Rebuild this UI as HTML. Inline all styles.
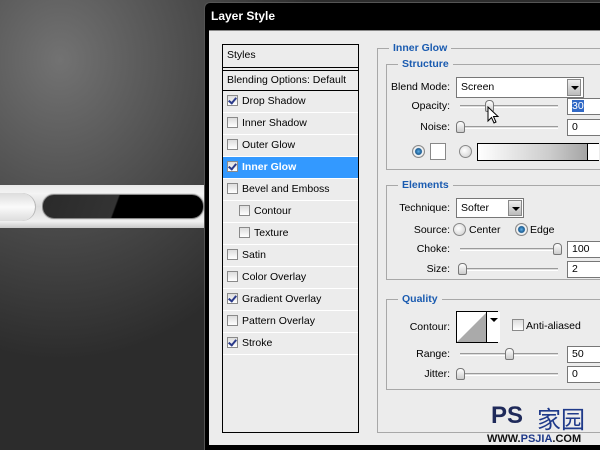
<!DOCTYPE html>
<html><head><style>
*{margin:0;padding:0;box-sizing:border-box}
html,body{width:600px;height:450px;overflow:hidden}
body{position:relative;font-family:"Liberation Sans",sans-serif;font-size:10.5px;color:#000;background:radial-gradient(ellipse 260px 300px at 60px 60px,#727272,#4a4a4a 55%,#2c2c2c);}
.a{position:absolute}
.row{position:absolute;left:0;width:135px;height:22px;border-bottom:1px solid #fff;line-height:21px;padding-left:4px;white-space:nowrap}
.cb{display:inline-block;width:11px;height:11px;border:1px solid #8a8a8a;background:linear-gradient(#ddd,#fff);vertical-align:-2px;margin-right:4px;position:relative}
.cb.c::after{content:"";position:absolute;left:2px;top:0px;width:3px;height:6px;border:solid #2a3a8a;border-width:0 2px 2px 0;transform:rotate(40deg)}
.box{position:absolute;border:1px solid #a8a8a8}
.leg{position:absolute;background:#ececec;color:#1a5bb0;font-weight:bold;padding:0 4px;font-size:10.5px}
.lbl{position:absolute;text-align:right;font-size:10.5px}
.sl{position:absolute;height:3px;border-top:1px solid #9a9a9a;border-bottom:1px solid #fff;background:#ddd}
.th{position:absolute;width:9px;height:12px;border:1px solid #777;border-radius:4px 4px 2px 2px;background:linear-gradient(#fff,#ccc)}
.in{position:absolute;background:#fff;border:1px solid #777;height:17px;line-height:15px;padding-left:4px}
.dd{position:absolute;width:14px;border:1px solid #888;background:linear-gradient(#eee,#bbb)}
.dd::after{content:"";position:absolute;left:3px;top:6px;border:4px solid transparent;border-top:4px solid #000}
.rad{position:absolute;width:13px;height:13px;border-radius:50%;border:1px solid #888;background:radial-gradient(circle at 40% 40%,#fff,#ccc)}
.rad.on{background:radial-gradient(circle,#5fb0e8 0,#1a5a90 3px,#fff 4px,#ccc 6px)}
</style></head><body>
<!-- left bar -->
<div class="a" style="left:0;top:185px;width:207px;height:43px;background:linear-gradient(#e8e8e8,#f4f4f4 20%,#dcdcdc 50%,#f0f0f0 85%,#c8c8c8)"></div>
<div class="a" style="left:0;top:193px;width:36px;height:28px;background:linear-gradient(#ddd,#fafafa,#ddd);border-radius:0 14px 14px 0;border-right:1px solid #bbb"></div>
<div class="a" style="left:18px;top:193px;width:18px;height:28px;border-radius:0 14px 14px 0;border-right:1px solid #bbb"></div>
<div class="a" style="left:42px;top:194px;width:162px;height:25px;border-radius:12px;border:1px solid #888;background:linear-gradient(110deg,#2a2a2a 0,#333 45%,#000 46%);box-shadow:0 0 0 1px #ddd"></div>
<!-- dialog -->
<div class="a" style="left:204px;top:2px;width:396px;height:448px;background:#000;border-radius:6px 0 0 0;border:1px solid #555;border-right:none;border-bottom:none"></div>
<div class="a" style="left:211px;top:9px;color:#fff;font-weight:bold;font-size:12px">Layer Style</div>
<div class="a" style="left:209px;top:30px;width:391px;height:415px;background:#ececec;border-top:1px solid #888"></div>
<!-- list -->
<div class="a" style="left:222px;top:44px;width:137px;height:389px;border:1px solid #000;background:#ececec">
<div class="row" style="top:0;height:23px;border-bottom:1px solid #000;line-height:20px">Styles</div>
<div class="row" style="top:25px;height:21px;border-top:1px solid #000;border-bottom:1px solid #000;line-height:19px">Blending Options: Default</div>
<div class="row" style="top:46px"><span class="cb c"></span>Drop Shadow</div>
<div class="row" style="top:68px"><span class="cb"></span>Inner Shadow</div>
<div class="row" style="top:90px"><span class="cb"></span>Outer Glow</div>
<div class="row" style="top:112px;background:#3399ff;color:#fff;font-weight:bold"><span class="cb c"></span>Inner Glow</div>
<div class="row" style="top:134px"><span class="cb"></span>Bevel and Emboss</div>
<div class="row" style="top:156px;padding-left:16px"><span class="cb"></span>Contour</div>
<div class="row" style="top:178px;padding-left:16px"><span class="cb"></span>Texture</div>
<div class="row" style="top:200px"><span class="cb"></span>Satin</div>
<div class="row" style="top:222px"><span class="cb"></span>Color Overlay</div>
<div class="row" style="top:244px"><span class="cb c"></span>Gradient Overlay</div>
<div class="row" style="top:266px"><span class="cb"></span>Pattern Overlay</div>
<div class="row" style="top:288px"><span class="cb c"></span>Stroke</div>
</div>
<!-- right -->
<div class="box" style="left:377px;top:48px;width:240px;height:385px"></div>
<div class="leg" style="left:389px;top:42px">Inner Glow</div>
<div class="box" style="left:386px;top:64px;width:230px;height:106px"></div>
<div class="leg" style="left:398px;top:58px">Structure</div>
<div class="lbl" style="left:380px;width:70px;top:81px">Blend Mode:</div>
<div class="in" style="left:456px;top:77px;width:128px;height:21px;line-height:19px">Screen</div>
<div class="dd" style="left:567px;top:79px;height:17px"></div>
<div class="lbl" style="left:380px;width:70px;top:100px">Opacity:</div>
<div class="sl" style="left:460px;top:105px;width:98px"></div><div class="th" style="left:485px;top:100px"></div>
<div class="in" style="left:567px;top:98px;width:40px"><span style="background:#3169c6;color:#fff">30</span></div>
<svg class="a" style="left:487px;top:106px" width="14" height="20"><path d="M1 1 L1 15 L4.5 11.5 L7 17 L9 16 L6.5 10.5 L11 10.5 Z" fill="#fff" stroke="#000"/></svg>
<div class="lbl" style="left:380px;width:70px;top:121px">Noise:</div>
<div class="sl" style="left:460px;top:126px;width:98px"></div><div class="th" style="left:456px;top:121px"></div>
<div class="in" style="left:567px;top:119px;width:40px">0</div>
<div class="rad on" style="left:412px;top:145px"></div>
<div class="a" style="left:430px;top:143px;width:16px;height:17px;background:#fff;border:1px solid #888"></div>
<div class="rad" style="left:459px;top:145px"></div>
<div class="a" style="left:477px;top:143px;width:122px;height:18px;border:1px solid #000;background:linear-gradient(90deg,#fff,#ccc 60%,#999)"></div>
<div class="a" style="left:587px;top:144px;width:12px;height:16px;background:#fff;border-left:1px solid #000"></div>
<div class="box" style="left:386px;top:185px;width:230px;height:95px"></div>
<div class="leg" style="left:398px;top:179px">Elements</div>
<div class="lbl" style="left:380px;width:70px;top:202px">Technique:</div>
<div class="in" style="left:456px;top:198px;width:68px;height:20px;line-height:18px">Softer</div>
<div class="dd" style="left:508px;top:200px;height:16px"></div>
<div class="lbl" style="left:380px;width:70px;top:224px">Source:</div>
<div class="rad" style="left:453px;top:223px"></div><div class="a" style="left:469px;top:224px">Center</div>
<div class="rad on" style="left:515px;top:223px"></div><div class="a" style="left:530px;top:224px">Edge</div>
<div class="lbl" style="left:380px;width:70px;top:243px">Choke:</div>
<div class="sl" style="left:460px;top:248px;width:98px"></div><div class="th" style="left:553px;top:243px"></div>
<div class="in" style="left:567px;top:241px;width:40px">100</div>
<div class="lbl" style="left:380px;width:70px;top:263px">Size:</div>
<div class="sl" style="left:460px;top:268px;width:98px"></div><div class="th" style="left:458px;top:263px"></div>
<div class="in" style="left:567px;top:261px;width:40px">2</div>
<div class="box" style="left:386px;top:299px;width:230px;height:91px"></div>
<div class="leg" style="left:398px;top:293px">Quality</div>
<div class="lbl" style="left:380px;width:70px;top:321px">Contour:</div>
<div class="a" style="left:456px;top:311px;width:42px;height:32px;border:1px solid #000;background:#fff">
<svg width="30" height="30" style="position:absolute;left:0;top:0"><path d="M0 30 L30 0 L30 30 Z" fill="#aaa"/></svg>
<div class="dd" style="left:29px;top:0;height:30px;border:none;background:#fff;border-left:1px solid #000"></div></div>
<div class="cb" style="position:absolute;left:512px;top:319px;width:12px;height:12px"></div>
<div class="a" style="left:526px;top:320px">Anti-aliased</div>
<div class="lbl" style="left:380px;width:70px;top:348px">Range:</div>
<div class="sl" style="left:460px;top:353px;width:98px"></div><div class="th" style="left:505px;top:348px"></div>
<div class="in" style="left:567px;top:346px;width:40px">50</div>
<div class="lbl" style="left:380px;width:70px;top:368px">Jitter:</div>
<div class="sl" style="left:460px;top:373px;width:98px"></div><div class="th" style="left:456px;top:368px"></div>
<div class="in" style="left:567px;top:366px;width:40px">0</div>
<!-- watermark -->
<div class="a" style="left:491px;top:402px;font-weight:bold;font-size:24px;color:#1f2a5a">PS</div>
<div class="a" style="left:537px;top:400px;font-size:24px;color:#1f3a8a;font-family:'Liberation Sans','Noto Sans CJK SC',sans-serif">家园</div>
<div class="a" style="left:487px;top:433px;font-weight:bold;font-size:11px;color:#111">WWW.<span style="color:#1f3a8a">PSJIA</span>.COM</div>
</body></html>
